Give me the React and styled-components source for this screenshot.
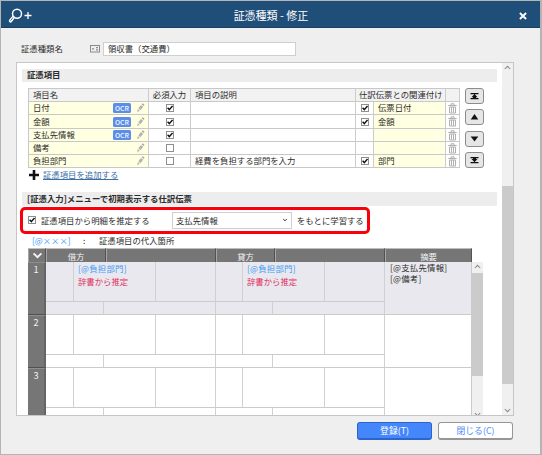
import { useState } from "react";
import styled, { createGlobalStyle } from "styled-components";

const GlobalStyle = createGlobalStyle`
  * {
    box-sizing: border-box;
  }
  body {
    margin: 0;
    font-family: "Noto Sans CJK JP", "Noto Sans", sans-serif;
    font-size: 8.37px;
    line-height: 12px;
    color: #2c2c2c;
    white-space: nowrap;
  }
  button, select, input {
    font: inherit;
  }
`;

const Window = styled.div`
  width: 542px;
  height: 455px;
  display: flex;
  flex-direction: column;
  background: #efefef;
  border: 1px solid #b4b4b4;
  border-right-width: 2px;
  overflow: hidden;
`;

const TitleBar = styled.header`
  height: 27px;
  flex: none;
  display: grid;
  grid-template-columns: 60px 1fr 60px;
  align-items: center;
  padding: 1px 13px 0 7px;
  background: #1f4e79;
  border-bottom: 1px solid #1b3f60;
  color: #fff;
`;

const Title = styled.h1`
  margin: 0 0 0 7px;
  font-size: 11px;
  font-weight: 400;
  line-height: 16px;
  text-align: center;
`;

const CloseButton = styled.button`
  justify-self: end;
  display: flex;
  padding: 0;
  margin-top: 3px;
  border: 0;
  background: none;
  color: #fff;
`;

const NameRow = styled.div`
  display: flex;
  align-items: center;
  height: 14px;
  margin: 14px 0 6px;
  padding-left: 20px;
  flex: none;
`;

const NameLabel = styled.label`
  width: 69px;
  margin-top: -2px;
`;

const NameInput = styled.input`
  width: 193px;
  height: 14px;
  margin-left: 3px;
  padding: 0 0 2px 4px;
  border: 1px solid #cfcfcf;
  background: #fff;
  color: #2c2c2c;
`;

const Panel = styled.main`
  display: flex;
  width: 498px;
  height: 354px;
  margin-left: 15px;
  flex: none;
  background: #fff;
  border: 1px solid #c6c6c6;
  overflow: hidden;
`;

const Content = styled.div`
  width: 485px;
  padding: 6px 0 0 5px;
`;

const SectionTitle = styled.h2`
  width: 475px;
  height: ${(p) => p.$height}px;
  margin: 0;
  padding-left: 5px;
  background: #ededed;
  font-size: 8.4px;
  font-weight: 700;
  line-height: ${(p) => p.$height - 2}px;
`;

const ItemArea = styled.div`
  display: flex;
  gap: 5px;
  margin: 6px 0 0 6px;
`;

const ItemTable = styled.div`
  width: 432px;
  border-left: 1px solid #c8c8c8;
  border-top: 1px solid #c8c8c8;
`;

const ItemRow = styled.div`
  display: grid;
  grid-template-columns: 120px 42px 165px 18px 72px 14px;
  height: ${(p) => p.$height || 13}px;
  background: ${(p) => (p.$head ? "#f2f2f2" : "#fff")};
`;

const Cell = styled.div`
  display: flex;
  align-items: center;
  justify-content: ${(p) => (p.$center ? "center" : "flex-start")};
  grid-column: span ${(p) => p.$span || 1};
  min-width: 0;
  padding-left: ${(p) => p.$pad || 0}px;
  border-right: 1px solid #cdcdcd;
  border-bottom: 1px solid #c8c8c8;
  background: ${(p) => (p.$yellow ? "#ffffe1" : "transparent")};
  line-height: 10px;
`;

const CellText = styled.span`
  padding-bottom: 2px;
`;

const OcrBadge = styled.span`
  width: 18px;
  height: 10px;
  margin: 0 5px 0 auto;
  border-radius: 1.5px;
  background: #5a8eea;
  color: #f2f7ff;
  font-size: 6.8px;
  font-weight: 500;
  line-height: 10px;
  text-align: center;
`;

const PencilSlot = styled.span`
  display: flex;
  margin-left: ${(p) => (p.$alone ? "auto" : 0)};
  margin-right: 3px;
`;

const Box = styled.button`
  display: flex;
  width: 8px;
  height: 8px;
  padding: 0;
  flex: none;
  border: 1px solid #8f8f8f;
  background: #fff;
`;

const MoveButtons = styled.div`
  display: flex;
  flex-direction: column;
  justify-content: space-between;
`;

const MoveButton = styled.button`
  display: flex;
  align-items: center;
  justify-content: center;
  width: 19px;
  height: 16px;
  padding: 0;
  border: 1px solid #8c8c8c;
  border-radius: 3px;
  background: #e6e6e6;
`;

const AddLine = styled.div`
  display: flex;
  align-items: center;
  height: 13px;
  margin: 0 0 11px 7px;
`;

const AddLink = styled.a`
  margin: -2px 0 0 4px;
  color: #3a6ea5;
  text-decoration: underline;
  text-underline-offset: 1px;
  text-decoration-thickness: 1px;
`;

const LearnBox = styled.div`
  display: flex;
  align-items: center;
  width: 350px;
  height: 27px;
  margin: 1px 0 0 -2px;
  padding: 0 0 1px 5px;
  border: 3px solid #f9000a;
  border-radius: 5px;
`;

const LearnLabel = styled.span`
  width: 131px;
  margin-left: 5px;
`;

const Select = styled.button`
  display: flex;
  align-items: center;
  justify-content: space-between;
  width: 120px;
  height: 17px;
  margin-right: 5px;
  padding: 0 3px 1px 3px;
  border: 1px solid #cfcfcf;
  background: #fff;
  color: #2c2c2c;
`;

const Legend = styled.div`
  display: flex;
  height: 14px;
  margin-left: 10px;
  line-height: 13px;
`;

const LegendMark = styled.span`
  width: 51px;
  color: #3d9bf5;
`;

const LegendColon = styled.span`
  width: 16px;
`;

const Journal = styled.div`
  display: flex;
  margin-left: 6px;
`;

const JournalTable = styled.div`
  width: 444px;
`;

const JournalHead = styled.div`
  display: grid;
  grid-template-columns: 18px 60px 110px 59px 110px 87px;
  grid-template-rows: 14px;
`;

const HeadCell = styled.div`
  display: flex;
  align-items: center;
  justify-content: center;
  min-height: 0;
  border-top: 1px solid #bdbdbd;
  border-right: 1px solid #525252;
  border-left: 1px solid #a5a5a5;
  background: #767676;
  color: #f2f2f2;
  line-height: 12px;
`;

const JournalRow = styled.div`
  display: grid;
  grid-template-columns: 18px 170px 169px 87px;
  height: 53px;
  background: ${(p) => (p.$active ? "#e9e8ef" : "#fff")};
`;

const RowNumber = styled.div`
  border-top: 1px solid #8e8e8e;
  border-right: 2px solid #656565;
  border-bottom: 1px solid #505050;
  background: #767676;
  color: #f2f2f2;
  font-size: 9.2px;
  line-height: 12px;
  text-align: center;
`;

const Side = styled.div`
  display: grid;
  grid-template-rows: 40px 13px;
`;

const SideLine = styled.div`
  display: grid;
  grid-template-columns: ${(p) => p.$columns};
`;

const Slot = styled.div`
  min-width: 0;
  padding-left: 4px;
  border-right: 1px solid #d0d0d0;
  border-bottom: 1px solid #cbcbcb;
`;

const Token = styled.div`
  color: #3d9bf5;
  letter-spacing: 0.25px;
  line-height: 12px;
`;

const Guess = styled.div`
  color: #e0305c;
  line-height: 14px;
`;

const Summary = styled.div`
  padding-left: 5px;
  border-right: 1px solid #cbcbcb;
  border-bottom: 1px solid #cbcbcb;
  line-height: 11px;
  letter-spacing: 0.25px;
`;

const ScrollBar = styled.div`
  display: flex;
  flex-direction: column;
  justify-content: space-between;
  align-items: center;
  width: ${(p) => p.$width}px;
  height: ${(p) => p.$height}px;
  margin-top: ${(p) => p.$top || 0}px;
  background: #f0f0f0;
  color: #8a8a8a;
`;

const Thumb = styled.div`
  width: 100%;
  height: ${(p) => p.$height}px;
  margin-top: ${(p) => p.$top}px;
  margin-bottom: auto;
  background: #cbcbcb;
`;

const Footer = styled.footer`
  display: flex;
  gap: 6px;
  margin: 6px 0 0 356px;
`;

const FooterButton = styled.button`
  width: 75px;
  height: 18px;
  padding: 0;
  border: 1px solid ${(p) => (p.$primary ? "#2d62cf" : "#969696")};
  border-bottom-width: 2px;
  border-radius: 3px;
  background: ${(p) => (p.$primary ? "#4387fb" : "#fff")};
  color: ${(p) => (p.$primary ? "#fff" : "#4f8ef5")};
  font-size: 8.8px;
  line-height: 13px;
`;

const items = [
  { name: "日付", ocr: true, required: true, link: "伝票日付" },
  { name: "金額", ocr: true, required: true, link: "金額", height: 14 },
  { name: "支払先情報", ocr: true, required: true },
  { name: "備考" },
  { name: "負担部門", note: "経費を負担する部門を入力", link: "部門" },
];

// to top, up, down, to bottom
const moves = [
  "M5 4h8v1.200H5zM9 5l3 3.200h-1.500V9H13v1.200H5V9h2.500v-.8H6z",
  "M9 4l3.800 5.500H5.200z",
  "M5.200 4.500h7.600L9 9.500z",
  "M5 10.200h8V9H5zM9 9.200L6 6h1.500v-.8H5V4h8v1.200h-2.500V6H12z",
];

function SearchPlusIcon() {
  return (
    <svg width="26" height="20" viewBox="0 0 26 20" fill="none" stroke="#fff">
      <circle cx="9" cy="8.800" r="4.500" strokeWidth="1.500" />
      <path d="M5 12.700l-2.500 3.200" strokeWidth="3.400" strokeLinecap="round" />
      <path d="M5 12.500l-2.500 3.200" stroke="#1f4e79" strokeWidth=".8" />
      <path d="M16.500 10.500h7M20 7v7" strokeWidth="1.300" />
    </svg>
  );
}

function CardIcon() {
  return (
    <svg width="10" height="8" viewBox="0 0 10 8" fill="none" stroke="#8a8a8a">
      <rect x=".5" y=".5" width="9" height="6.500" />
      <path d="M2 3.800h2M6 2.600h2M6 4.800h2" strokeWidth="1.200" />
    </svg>
  );
}

function PencilIcon() {
  return (
    <svg width="9" height="10" viewBox="0 0 9 10">
      <path d="M2.300 5.200L5 2l2.200 1.700-2.800 3.600z" fill="#b3b3b0" />
      <path d="M5.700 1.300L6.700.3l1.800 1.500-.8 1.100z" fill="#a6a6a4" />
      <path d="M1.800 6l1.900 1.700-2.500 1.500z" fill="#b3b3b0" />
    </svg>
  );
}

function TrashIcon() {
  return (
    <svg width="9" height="11" viewBox="0 0 9 11" fill="none" stroke="#b0b0b0">
      <path d="M.3 2.500h8.400M3 2.300V.8h3v1.500" />
      <path d="M1.500 4v6h6V4M3.500 4v5.500M5.500 4v5.500M1.500 4h6" />
    </svg>
  );
}

function Chevron({ up, size = 6, width = 1 }) {
  return (
    <svg width={size} height={size} viewBox="0 0 6 6" fill="none" stroke="currentColor" strokeWidth={width}>
      <path d={up ? "M1.200 4L3 2.200 4.800 4" : "M1.200 2L3 3.800 4.800 2"} />
    </svg>
  );
}

function CheckBox({ initial = false }) {
  const [checked, setChecked] = useState(initial);

  return (
    <Box onClick={() => setChecked(!checked)}>
      {checked && (
        <svg width="6" height="6" viewBox="0 0 6 6" fill="none" stroke="#111" strokeWidth="1.400">
          <path d="M.6 2.800l1.700 1.800L5.500.9" />
        </svg>
      )}
    </Box>
  );
}

function JournalSide({ upper, lower, filled }) {
  return (
    <Side>
      <SideLine $columns={upper}>
        <Slot />
        <Slot>
          {filled && <Token>[@負担部門]</Token>}
          {filled && <Guess>辞書から推定</Guess>}
        </Slot>
        <Slot />
      </SideLine>
      <SideLine $columns={lower}>
        <Slot />
        <Slot />
      </SideLine>
    </Side>
  );
}

export default function App() {
  const [name, setName] = useState("領収書（交通費）");

  return (
    <Window>
      <GlobalStyle />
      <TitleBar>
        <SearchPlusIcon />
        <Title>証憑種類 - 修正</Title>
        <CloseButton>
          <svg width="8" height="8" viewBox="0 0 8 8" stroke="#fff" strokeWidth="1.900">
            <path d="M.9 1l6.200 6M7.100 1L.9 7" />
          </svg>
        </CloseButton>
      </TitleBar>

      <NameRow>
        <NameLabel>証憑種類名</NameLabel>
        <CardIcon />
        <NameInput value={name} onChange={(e) => setName(e.target.value)} />
      </NameRow>

      <Panel>
        <Content>
          <SectionTitle $height={13}>証憑項目</SectionTitle>
          <ItemArea>
            <ItemTable>
              <ItemRow $head>
                <Cell $pad={4}><CellText>項目名</CellText></Cell>
                <Cell $center><CellText>必須入力</CellText></Cell>
                <Cell $pad={4}><CellText>項目の説明</CellText></Cell>
                <Cell $pad={3} $span={2}><CellText>仕訳伝票との関連付け</CellText></Cell>
                <Cell />
              </ItemRow>
              {items.map((item) => (
                <ItemRow key={item.name} $height={item.height}>
                  <Cell $pad={4} $yellow>
                    <CellText>{item.name}</CellText>
                    {item.ocr && <OcrBadge>OCR</OcrBadge>}
                    <PencilSlot $alone={!item.ocr}><PencilIcon /></PencilSlot>
                  </Cell>
                  <Cell $center><CheckBox initial={item.required} /></Cell>
                  <Cell $pad={4}><CellText>{item.note}</CellText></Cell>
                  <Cell $center>{item.link && <CheckBox initial />}</Cell>
                  <Cell $pad={4} $yellow><CellText>{item.link}</CellText></Cell>
                  <Cell $center><TrashIcon /></Cell>
                </ItemRow>
              ))}
            </ItemTable>
            <MoveButtons>
              {moves.map((d) => (
                <MoveButton key={d}>
                  <svg width="17" height="14" viewBox="0.500 0 17 14"><path d={d} fill="#111" /></svg>
                </MoveButton>
              ))}
            </MoveButtons>
          </ItemArea>
          <AddLine>
            <svg width="10" height="10" viewBox="0 0 10 10" stroke="#111" strokeWidth="2.600">
              <path d="M0 5h10M5 0v10" />
            </svg>
            <AddLink>証憑項目を追加する</AddLink>
          </AddLine>

          <SectionTitle $height={14}>[証憑入力]メニューで初期表示する仕訳伝票</SectionTitle>
          <LearnBox>
            <CheckBox initial />
            <LearnLabel>証憑項目から明細を推定する</LearnLabel>
            <Select>支払先情報<Chevron /></Select>
            をもとに学習する
          </LearnBox>
          <Legend>
            <LegendMark>[@×××]</LegendMark>
            <LegendColon>:</LegendColon>
            証憑項目の代入箇所
          </Legend>

          <Journal>
            <JournalTable>
              <JournalHead>
                <HeadCell><Chevron size={13} width={0.9} /></HeadCell>
                <HeadCell>借方</HeadCell>
                <HeadCell />
                <HeadCell>貸方</HeadCell>
                <HeadCell />
                <HeadCell>摘要</HeadCell>
              </JournalHead>
              {[1, 2, 3].map((n) => (
                <JournalRow key={n} $active={n === 1}>
                  <RowNumber>{n}</RowNumber>
                  <JournalSide upper="28px 82px 60px" lower="58px 112px" filled={n === 1} />
                  <JournalSide upper="27px 82px 60px" lower="57px 112px" filled={n === 1} />
                  <Summary>
                    {n === 1 && <div>[@支払先情報]</div>}
                    {n === 1 && <div>[@備考]</div>}
                  </Summary>
                </JournalRow>
              ))}
            </JournalTable>
            <ScrollBar $width={11} $height={157} $top={14}>
              <Chevron up size={9} width={0.7} />
              <Thumb $height={103} $top={2} />
              <Chevron size={9} width={0.7} />
            </ScrollBar>
          </Journal>
        </Content>
        <ScrollBar $width={11} $height={352}>
          <Chevron up size={9} width={0.7} />
          <Thumb $height={198} $top={114} />
          <Chevron size={9} width={0.7} />
        </ScrollBar>
      </Panel>

      <Footer>
        <FooterButton $primary>登録(T)</FooterButton>
        <FooterButton>閉じる(C)</FooterButton>
      </Footer>
    </Window>
  );
}
